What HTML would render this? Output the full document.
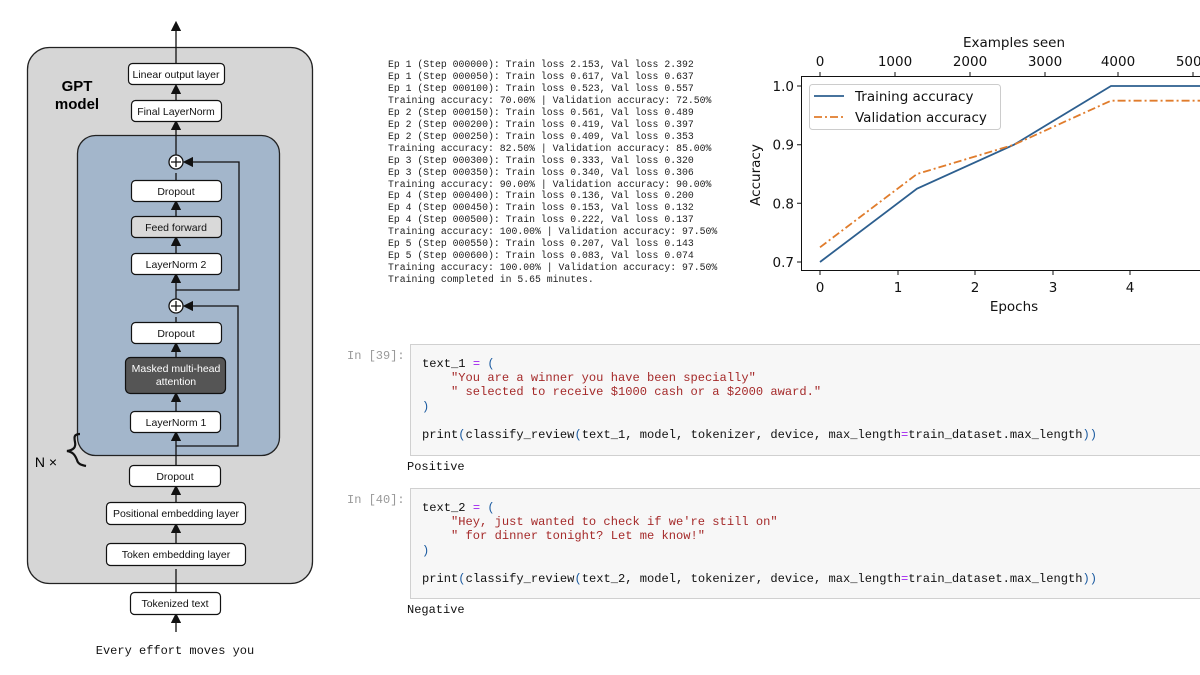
<!DOCTYPE html>
<html><head><meta charset="utf-8"><style>
body{margin:0;width:1200px;height:675px;background:#fff;position:relative;overflow:hidden;font-family:"Liberation Sans",sans-serif}
.abs{position:absolute}
.log{left:388px;top:59px;font:9.8px/11.95px "Liberation Mono",monospace;color:#222;white-space:pre}
.cell{left:410px;width:800px;background:#f7f7f7;border:1px solid #d0d0d0;box-sizing:border-box}
.code{position:absolute;left:11px;font:12.1px/14.2px "Liberation Mono",monospace;color:#111;white-space:pre}
.s{color:#a52a2a}.o{color:#a020f0}.p{color:#1a5aa0}
.pr{font:12px "Liberation Mono",monospace;color:#999}
.out{font:12px "Liberation Mono",monospace;color:#111;left:407px}
</style></head><body>
<svg class="abs" style="left:0;top:0" width="360" height="675" font-family="Liberation Sans, sans-serif" font-size="10.5" text-anchor="middle">
<defs><marker id="a" markerWidth="8" markerHeight="8" refX="4" refY="4" orient="auto"><path d="M0,0L8,4L0,8z" fill="#111"/></marker></defs>
<rect x="27.5" y="47.5" width="285" height="536" rx="22" fill="#d6d6d6" stroke="#222" stroke-width="1.3"/>
<rect x="77.5" y="135.5" width="202" height="320" rx="18" fill="#a3b6cb" stroke="#222" stroke-width="1.3"/>
<text x="77" y="91" font-size="15" font-weight="bold">GPT</text>
<text x="77" y="109" font-size="15" font-weight="bold">model</text>
<g stroke="#111" stroke-width="1.3" fill="none">
<line x1="176" y1="63" x2="176" y2="26" marker-end="url(#a)"/>
<line x1="176" y1="100" x2="176" y2="89" marker-end="url(#a)"/>
<line x1="176" y1="155" x2="176" y2="125" marker-end="url(#a)"/>
<line x1="176" y1="180" x2="176" y2="173"/>
<line x1="176" y1="216" x2="176" y2="205" marker-end="url(#a)"/>
<line x1="176" y1="253" x2="176" y2="241" marker-end="url(#a)"/>
<line x1="176" y1="299" x2="176" y2="278" marker-end="url(#a)"/>
<line x1="176" y1="322" x2="176" y2="317"/>
<line x1="176" y1="357" x2="176" y2="347" marker-end="url(#a)"/>
<line x1="176" y1="411" x2="176" y2="397" marker-end="url(#a)"/>
<line x1="176" y1="465" x2="176" y2="436" marker-end="url(#a)"/>
<line x1="176" y1="502" x2="176" y2="490" marker-end="url(#a)"/>
<line x1="176" y1="543" x2="176" y2="528" marker-end="url(#a)"/>
<line x1="176" y1="592" x2="176" y2="569"/>
<line x1="176" y1="632" x2="176" y2="618" marker-end="url(#a)"/>
<path d="M176,290H239V162H188" marker-end="url(#a)"/>
<path d="M176,446H238V306H188" marker-end="url(#a)"/>
<circle cx="176" cy="162" r="7" fill="#fff"/><path d="M171,162h10M176,157v10"/>
<circle cx="176" cy="306" r="7" fill="#fff"/><path d="M171,306h10M176,301v10"/>
<path d="M80,434c-6,0-6,3-5,8c1,5,-1,8,-8,9c6,1,8,4,10,9c1,4,4,5,9,6" stroke-width="2.2"/>
</g>
<text x="46" y="467" font-size="14">N ×</text>
<g stroke="#111" stroke-width="1.2">
<rect x="128.5" y="63.5" width="96" height="21" rx="4" fill="#fff"/>
<rect x="131.5" y="100.5" width="90" height="21" rx="4" fill="#fff"/>
<rect x="131.5" y="180.5" width="90" height="21" rx="4" fill="#fff"/>
<rect x="131.5" y="216.5" width="90" height="21" rx="4" fill="#d9d9d9"/>
<rect x="131.5" y="253.5" width="90" height="21" rx="4" fill="#fff"/>
<rect x="131.5" y="322.5" width="90" height="21" rx="4" fill="#fff"/>
<rect x="125.5" y="357.5" width="100" height="36" rx="5" fill="#555"/>
<rect x="130.5" y="411.5" width="90" height="21" rx="4" fill="#fff"/>
<rect x="129.5" y="465.5" width="91" height="21" rx="4" fill="#fff"/>
<rect x="106.5" y="502.5" width="139" height="22" rx="4" fill="#fff"/>
<rect x="106.5" y="543.5" width="139" height="22" rx="4" fill="#fff"/>
<rect x="130.5" y="592.5" width="90" height="22" rx="4" fill="#fff"/>
</g>
<g fill="#111">
<text x="176" y="78">Linear output layer</text>
<text x="176" y="115">Final LayerNorm</text>
<text x="176" y="195">Dropout</text>
<text x="176" y="231">Feed forward</text>
<text x="176" y="268">LayerNorm 2</text>
<text x="176" y="337">Dropout</text>
<text x="176" y="372" fill="#fff">Masked multi-head</text>
<text x="176" y="385" fill="#fff">attention</text>
<text x="176" y="426">LayerNorm 1</text>
<text x="175" y="480">Dropout</text>
<text x="176" y="517">Positional embedding layer</text>
<text x="176" y="558">Token embedding layer</text>
<text x="175" y="607">Tokenized text</text>
<text x="175" y="654" font-family="Liberation Mono, monospace" font-size="12">Every effort moves you</text>
</g>
</svg>
<div class="abs log">Ep 1 (Step 000000): Train loss 2.153, Val loss 2.392
Ep 1 (Step 000050): Train loss 0.617, Val loss 0.637
Ep 1 (Step 000100): Train loss 0.523, Val loss 0.557
Training accuracy: 70.00% | Validation accuracy: 72.50%
Ep 2 (Step 000150): Train loss 0.561, Val loss 0.489
Ep 2 (Step 000200): Train loss 0.419, Val loss 0.397
Ep 2 (Step 000250): Train loss 0.409, Val loss 0.353
Training accuracy: 82.50% | Validation accuracy: 85.00%
Ep 3 (Step 000300): Train loss 0.333, Val loss 0.320
Ep 3 (Step 000350): Train loss 0.340, Val loss 0.306
Training accuracy: 90.00% | Validation accuracy: 90.00%
Ep 4 (Step 000400): Train loss 0.136, Val loss 0.200
Ep 4 (Step 000450): Train loss 0.153, Val loss 0.132
Ep 4 (Step 000500): Train loss 0.222, Val loss 0.137
Training accuracy: 100.00% | Validation accuracy: 97.50%
Ep 5 (Step 000550): Train loss 0.207, Val loss 0.143
Ep 5 (Step 000600): Train loss 0.083, Val loss 0.074
Training accuracy: 100.00% | Validation accuracy: 97.50%
Training completed in 5.65 minutes.</div>
<svg class="abs" style="left:740px;top:30px" width="460" height="290" font-family="DejaVu Sans, sans-serif" font-size="13.5" fill="#111">
<g stroke="#111" stroke-width="1" fill="none">
<rect x="61.5" y="46.5" width="420" height="194"/>
<path d="M80,46v-4M155,46v-4M230,46v-4M305,46v-4M378,46v-4M453,46v-4"/>
<path d="M80,241v4M158,241v4M235,241v4M313,241v4M390,241v4"/>
<path d="M61,56h-4M61,114.7h-4M61,173.3h-4M61,232h-4"/>
</g>
<g text-anchor="middle">
<text x="274" y="17">Examples seen</text>
<text x="80" y="36">0</text><text x="155" y="36">1000</text><text x="230" y="36">2000</text><text x="305" y="36">3000</text><text x="378" y="36">4000</text><text x="453" y="36">5000</text>
<text x="80" y="262">0</text><text x="158" y="262">1</text><text x="235" y="262">2</text><text x="313" y="262">3</text><text x="390" y="262">4</text>
<text x="274" y="281">Epochs</text>
<text transform="translate(20,145) rotate(-90)">Accuracy</text>
</g>
<g text-anchor="end"><text x="54" y="61">1.0</text><text x="54" y="119.7">0.9</text><text x="54" y="178.3">0.8</text><text x="54" y="237">0.7</text></g>
<polyline points="80,232 177,158.7 274,114.7 371,56 470,56" stroke="#2d5f8f" stroke-width="1.8" fill="none"/>
<polyline points="80,217.3 177,144 274,114.7 371,70.7 470,70.7" stroke="#e07c2c" stroke-width="1.8" fill="none" stroke-dasharray="8,3,2,3"/>
<rect x="69.5" y="54.5" width="191" height="45" rx="3" fill="#fff" stroke="#ccc"/>
<line x1="74" y1="66" x2="104" y2="66" stroke="#2d5f8f" stroke-width="1.8"/>
<line x1="74" y1="87" x2="104" y2="87" stroke="#e07c2c" stroke-width="1.8" stroke-dasharray="8,3,2,3"/>
<text x="115" y="71">Training accuracy</text>
<text x="115" y="92">Validation accuracy</text>
</svg>
<div class="abs pr" style="left:347px;top:349px">In [39]:</div>
<div class="abs cell" style="top:344px;height:112px">
<div class="code" style="top:12px">text_1 <span class="o">=</span> <span class="p">(</span>
    <span class="s">"You are a winner you have been specially"</span>
    <span class="s">" selected to receive $1000 cash or a $2000 award."</span>
<span class="p">)</span>

print<span class="p">(</span>classify_review<span class="p">(</span>text_1, model, tokenizer, device, max_length<span class="o">=</span>train_dataset.max_length<span class="p">))</span></div></div>
<div class="abs out" style="top:460px">Positive</div>
<div class="abs pr" style="left:347px;top:493px">In [40]:</div>
<div class="abs cell" style="top:488px;height:111px">
<div class="code" style="top:12px">text_2 <span class="o">=</span> <span class="p">(</span>
    <span class="s">"Hey, just wanted to check if we're still on"</span>
    <span class="s">" for dinner tonight? Let me know!"</span>
<span class="p">)</span>

print<span class="p">(</span>classify_review<span class="p">(</span>text_2, model, tokenizer, device, max_length<span class="o">=</span>train_dataset.max_length<span class="p">))</span></div></div>
<div class="abs out" style="top:603px">Negative</div>
</body></html>
